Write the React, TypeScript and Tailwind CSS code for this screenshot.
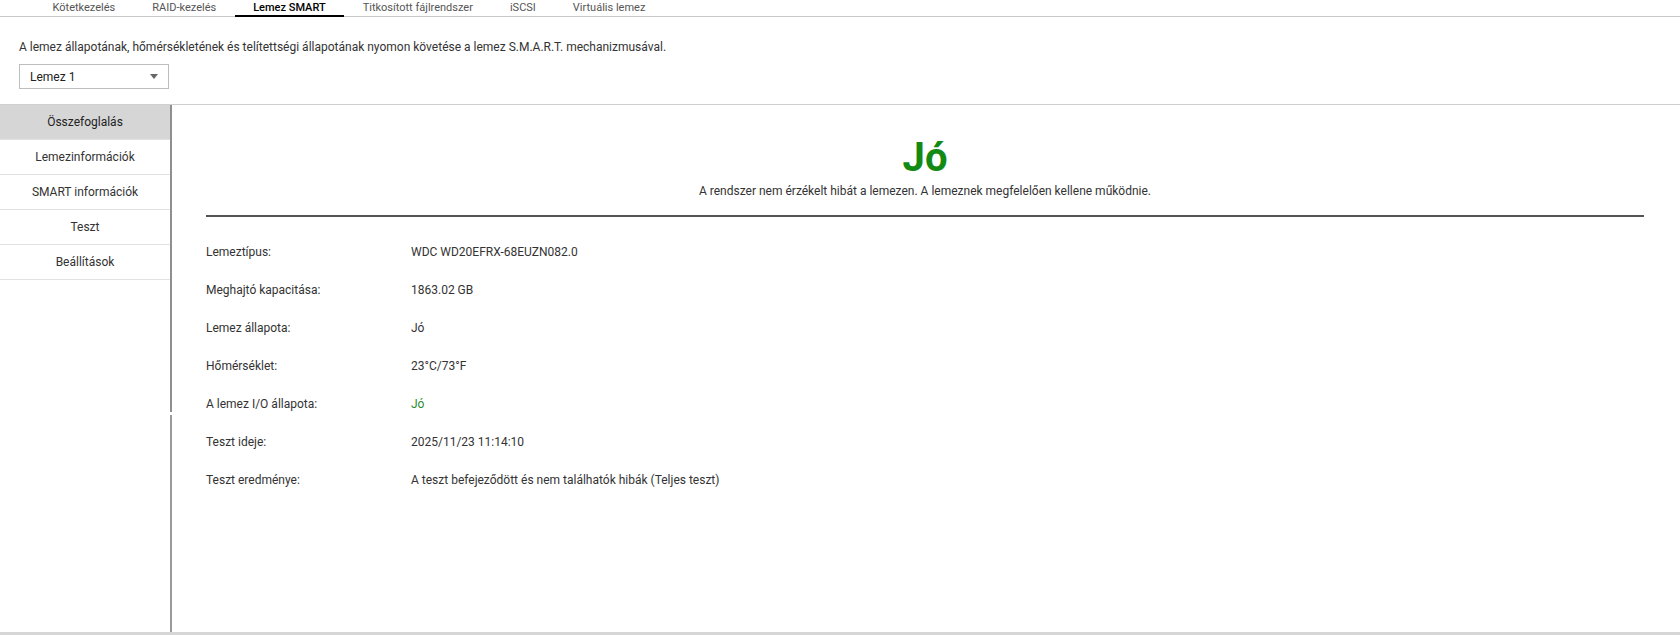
const TABS = ["Kötetkezelés", "RAID-kezelés", "Lemez SMART", "Titkosított fájlrendszer", "iSCSI", "Virtuális lemez"];
const MENU = ["Összefoglalás", "Lemezinformációk", "SMART információk", "Teszt", "Beállítások"];

const ROWS: { label: string; value: string; green?: boolean }[] = [
  { label: "Lemeztípus:", value: "WDC WD20EFRX-68EUZN082.0" },
  { label: "Meghajtó kapacitása:", value: "1863.02 GB" },
  { label: "Lemez állapota:", value: "Jó" },
  { label: "Hőmérséklet:", value: "23°C/73°F" },
  { label: "A lemez I/O állapota:", value: "Jó", green: true },
  { label: "Teszt ideje:", value: "2025/11/23 11:14:10" },
  { label: "Teszt eredménye:", value: "A teszt befejeződött és nem találhatók hibák (Teljes teszt)" },
];

export default function App() {
  return (
    <div className="flex h-[635px] w-[1680px] flex-col overflow-hidden bg-white text-[12px] text-[#333] [font-family:Roboto,'Liberation_Sans',sans-serif]">
      {/* tabs */}
      <div className="flex h-[17px] shrink-0 border-b border-[#c8c8c8] pl-[34px]">
        {TABS.map((t) => {
          const active = t === "Lemez SMART";
          return (
            <div
              key={t}
              className={`-mb-px flex items-center px-[18.5px] text-[11px] leading-[14px] ${
                active ? "border-b-[2px] border-black font-medium text-black" : "border-b-[2px] border-transparent text-[#555]"
              }`}
            >
              {t}
            </div>
          );
        })}
      </div>

      <div className="mt-[23px] pl-[19px] leading-[14px] text-[#333]">
        A lemez állapotának, hőmérsékletének és telítettségi állapotának nyomon követése a lemez S.M.A.R.T. mechanizmusával.
      </div>

      <div className="ml-[19px] mt-[10px] flex h-[25px] w-[150px] items-center justify-between border border-[#bdbdbd] pl-[10px] pr-[10px] text-[#222]">
        <span>Lemez 1</span>
        <svg width="8" height="5" viewBox="0 0 8 5">
          <path d="M0 0h8L4 5z" fill="#666" />
        </svg>
      </div>

      {/* body */}
      <div className="mt-[15px] flex flex-1 border-t border-[#cfcfcf] border-b-[3px] border-b-[#d6d6d6]">
        <div className="w-[170px] shrink-0">
          {MENU.map((m, i) => (
            <div
              key={m}
              className={`flex h-[35px] items-center justify-center border-b border-[#e2e2e2] ${
                i === 0 ? "bg-[#d6d6d6] text-[#222]" : "text-[#333]"
              }`}
            >
              {m}
            </div>
          ))}
        </div>
        <div className="flex w-[2px] shrink-0 flex-col">
          <div className="h-[307px] bg-[#8f8f8f]" />
          <div className="h-[3px]" />
          <div className="flex-1 bg-[#9a9a9a]" />
        </div>

        <div className="flex flex-1 flex-col pl-[34px] pr-[36px]">
          <div className="mt-[33px] text-center text-[40px] font-bold leading-[40px] text-[#138a13]">Jó</div>
          <div className="mt-[5px] text-center leading-[16px] text-[#333]">
            A rendszer nem érzékelt hibát a lemezen. A lemeznek megfelelően kellene működnie.
          </div>
          <div className="mt-[16px] h-[2px] bg-[#555]" />

          <div className="mt-[16px] flex flex-col">
            {ROWS.map((r) => (
              <div key={r.label} className="flex h-[38px] items-center">
                <div className="w-[205px] shrink-0 text-[#333]">{r.label}</div>
                <div className={r.green ? "text-[#2e8b2e]" : "text-[#333]"}>{r.value}</div>
              </div>
            ))}
          </div>
        </div>
      </div>
    </div>
  );
}
